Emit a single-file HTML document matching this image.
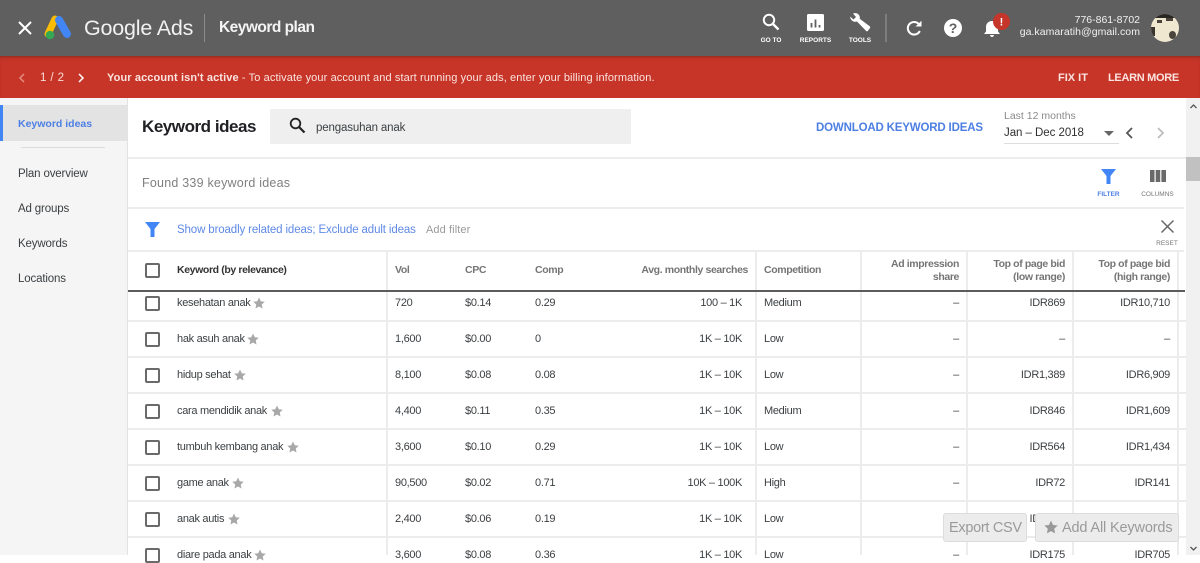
<!DOCTYPE html>
<html><head><meta charset="utf-8"><style>
html,body{margin:0;padding:0}
body{width:1200px;height:555px;overflow:hidden;position:relative;background:#fff;font-family:"Liberation Sans",sans-serif;color:#3c4043}
.a{position:absolute}
.t{position:absolute;white-space:nowrap;line-height:14px;font-size:11px;letter-spacing:-.3px}
.r{text-align:right}
.hl{position:absolute;background:#ececec;height:2px}
.vl{position:absolute;background:#ececec;width:2px;top:251px;height:304px}
.cb{position:absolute;left:145px;width:11px;height:11px;border:2px solid #6a6a6a;border-radius:2px;background:#fff}
.h{color:#757575;font-weight:bold;font-size:10.5px;letter-spacing:-.38px}
.star{position:absolute;width:12px;height:12px}
.lb{position:absolute;font-size:6.5px;font-weight:bold;color:#fff;white-space:nowrap;text-align:center;line-height:8px}
svg{position:absolute;overflow:visible}
</style></head><body>

<!-- top bar -->
<div class="a" style="left:0;top:0;width:1200px;height:56px;background:#5f5f5f"></div>
<svg style="left:18px;top:21px" width="14" height="14"><path d="M1 1L13 13M13 1L1 13" stroke="#fff" stroke-width="2"/></svg>
<svg style="left:45px;top:15px" width="28" height="25" viewBox="0 0 28 25"><path d="M10 4L3 19" stroke="#fbbc04" stroke-width="7" stroke-linecap="round"/><path d="M14 5L22 19" stroke="#4285f4" stroke-width="8" stroke-linecap="round"/><circle cx="5" cy="20" r="4.3" fill="#34a853"/></svg>
<div class="t" style="left:84px;top:14px;font-size:21.5px;line-height:28px;color:#f1f1f1;letter-spacing:-.2px">Google Ads</div>
<div class="a" style="left:204px;top:14px;width:1px;height:28px;background:#8a8a8a"></div>
<div class="t" style="left:219px;top:18px;font-size:15.5px;line-height:20px;font-weight:bold;color:#f4f4f4;letter-spacing:-.52px">Keyword plan</div>

<svg style="left:762px;top:13px" width="18" height="18"><circle cx="7" cy="7" r="5.2" fill="none" stroke="#fff" stroke-width="2"/><path d="M11 11L16.5 16.5" stroke="#fff" stroke-width="2.4"/></svg>
<div class="lb" style="left:751px;top:36.5px;width:40px">GO TO</div>
<svg style="left:807px;top:14px" width="17" height="17"><rect width="17" height="17" rx="1.5" fill="#fff"/><path d="M4.5 9v4.5M8.5 5.5v8M12.5 11v2.5" stroke="#5f5f5f" stroke-width="1.8"/></svg>
<div class="lb" style="left:795px;top:36.5px;width:41px">REPORTS</div>
<svg style="left:849px;top:12px" width="22" height="20" viewBox="0 0 22 20"><path d="M1 4.5L4.5 7.5L7 5L4 1.5C6.5 .5 9.5 1.2 10.5 4C10.9 5 10.9 6 10.7 6.7L21 14.5Q21.5 15.2 21 16L18.8 19Q18 19.7 17.2 19L8 9.5C5.500 10.3 1.8 9.5 1 4.5Z" fill="#fff"/></svg>
<div class="lb" style="left:845px;top:36.5px;width:30px">TOOLS</div>
<div class="a" style="left:885px;top:14px;width:2px;height:28px;background:#7d7d7d"></div>
<svg style="left:906px;top:20px" width="17" height="17" viewBox="0 0 17 17"><path d="M13.8 11A6.3 6.3 0 1 1 12.5 3.7" fill="none" stroke="#fff" stroke-width="2"/><path d="M9.5 6.5H15.5V.8Z" fill="#fff"/></svg>
<svg style="left:944px;top:19px" width="18" height="18"><circle cx="9" cy="9" r="9" fill="#fff"/><text x="9" y="14" text-anchor="middle" font-family="Liberation Sans" font-size="14" font-weight="bold" fill="#5f5f5f">?</text></svg>
<svg style="left:983px;top:19px" width="18" height="18" viewBox="0 0 18 18"><path d="M1 15L3 12.5V8C3 4.5 5.5 2 9 2S15 4.5 15 8V12.5L17 15Z" fill="#fff"/><path d="M7 16H11Q10.5 18 9 18T7 16Z" fill="#fff"/></svg>
<svg style="left:993px;top:13px" width="18" height="18"><circle cx="8.5" cy="8.5" r="8.5" fill="#c5352a"/><text x="8.5" y="12.5" text-anchor="middle" font-family="Liberation Sans" font-size="11" font-weight="bold" fill="#fff">!</text></svg>
<div class="t r" style="right:60px;top:13px;font-size:10.5px;color:#f1f1f1;letter-spacing:0">776-861-8702</div>
<div class="t r" style="right:60px;top:25px;font-size:10.5px;color:#f1f1f1;letter-spacing:.05px">ga.kamaratih@gmail.com</div>
<div class="a" style="left:1151px;top:14px;width:28px;height:28px;border-radius:50%;overflow:hidden;background:#efe7cf">
<div class="a" style="left:4px;top:0;width:20px;height:4px;background:#2a2622"></div>
<div class="a" style="left:6px;top:6px;width:5px;height:3px;background:#4a443c"></div>
<div class="a" style="left:15px;top:4px;width:7px;height:3px;background:#4a443c"></div>
<div class="a" style="left:0;top:13px;width:4px;height:9px;background:#3a352f"></div>
<div class="a" style="left:18px;top:17px;width:7px;height:8px;background:#4a443c;border-radius:50%"></div>
</div>

<!-- red banner -->
<div class="a" style="left:0;top:56px;width:1200px;height:42px;background:#c63527;box-shadow:inset 0 3px 3px -2px rgba(90,30,25,.55)"></div>
<svg style="left:18px;top:73px" width="7" height="10"><path d="M6 1L2 5L6 9" fill="none" stroke="#e58d82" stroke-width="1.5"/></svg>
<div class="t" style="left:40px;top:71px;font-size:11.5px;color:#f9dcd8;letter-spacing:.4px">1 / 2</div>
<svg style="left:78px;top:73px" width="7" height="10"><path d="M1 1L5 5L1 9" fill="none" stroke="#fff" stroke-width="1.5"/></svg>
<div class="t" style="left:107px;top:71px;font-size:11px;color:#fbe3e0;letter-spacing:.11px"><b>Your account isn't active</b> - To activate your account and start running your ads, enter your billing information.</div>
<div class="t" style="left:1058px;top:71px;font-size:11px;font-weight:bold;color:#fbe3e0;letter-spacing:0">FIX IT</div>
<div class="t" style="left:1108px;top:71px;font-size:11px;font-weight:bold;color:#fbe3e0;letter-spacing:-.3px">LEARN MORE</div>

<!-- sidebar -->
<div class="a" style="left:0;top:98px;width:127px;height:457px;background:#f5f5f5"></div>
<div class="a" style="left:0;top:105px;width:127px;height:36px;background:#e3e3e3"></div>
<div class="a" style="left:0;top:105px;width:3px;height:36px;background:#4285f4"></div>
<div class="t" style="left:18px;top:116.5px;color:#4d7fe3;font-weight:bold;font-size:10.5px;letter-spacing:0">Keyword ideas</div>
<div class="a" style="left:21px;top:147px;width:84px;height:1px;background:#dcdcdc"></div>
<div class="t" style="left:18px;top:166.5px;font-size:11.5px;letter-spacing:-.15px">Plan overview</div>
<div class="t" style="left:18px;top:201.5px;font-size:11.5px;letter-spacing:-.15px">Ad groups</div>
<div class="t" style="left:18px;top:236.5px;font-size:11.5px;letter-spacing:-.15px">Keywords</div>
<div class="t" style="left:18px;top:271.5px;font-size:11.5px;letter-spacing:-.15px">Locations</div>
<div class="a" style="left:127px;top:98px;width:1px;height:457px;background:#e2e2e2"></div>

<!-- header area -->
<div class="t" style="left:142px;top:117px;line-height:20px;font-size:17px;color:#202124;font-weight:bold;letter-spacing:-.46px">Keyword ideas</div>
<div class="a" style="left:270px;top:109px;width:361px;height:35px;background:#efefef"></div>
<svg style="left:289px;top:117px" width="17" height="17"><circle cx="6.5" cy="6.5" r="4.8" fill="none" stroke="#222" stroke-width="1.8"/><path d="M10 10L15.5 15.5" stroke="#222" stroke-width="2.2"/></svg>
<div class="t" style="left:316px;top:121px;font-size:11.5px;letter-spacing:-.15px">pengasuhan anak</div>
<div class="t" style="left:816px;top:121px;font-size:11.5px;font-weight:bold;color:#4d7fe3;letter-spacing:-.17px">DOWNLOAD KEYWORD IDEAS</div>
<div class="t" style="left:1004px;top:109px;font-size:10.5px;color:#8a8a8a;letter-spacing:0">Last 12 months</div>
<div class="t" style="left:1004px;top:126px;font-size:11.5px;color:#303030;letter-spacing:-.05px">Jan – Dec 2018</div>
<div class="a" style="left:1004px;top:143px;width:115px;height:1px;background:#dedede"></div>
<svg style="left:1104px;top:131px" width="10" height="5"><path d="M0 0H10L5 5Z" fill="#666"/></svg>
<svg style="left:1125px;top:127px" width="8" height="12"><path d="M7 1L2 6L7 11" fill="none" stroke="#555" stroke-width="1.8"/></svg>
<svg style="left:1157px;top:127px" width="8" height="12"><path d="M1 1L6 6L1 11" fill="none" stroke="#bdbdbd" stroke-width="1.8"/></svg>
<div class="hl" style="left:128px;top:157px;width:1058px"></div>

<!-- found row -->
<div class="t" style="left:142px;top:175.5px;font-size:12.5px;color:#808080;letter-spacing:.22px">Found 339 keyword ideas</div>
<svg style="left:1101px;top:169px" width="15" height="15"><path d="M0 0H15L9.5 7V15H5.5V7Z" fill="#4285f4"/></svg>
<div class="lb" style="left:1090px;top:191px;width:37px;color:#4d7fe3">FILTER</div>
<svg style="left:1150px;top:170px" width="16" height="12"><path d="M0 0H4.5V12H0ZM5.7 0H10.2V12H5.7ZM11.4 0H16V12H11.4Z" fill="#6a6a6a"/></svg>
<div class="lb" style="left:1138px;top:191px;width:39px;color:#777;font-weight:normal">COLUMNS</div>
<div class="hl" style="left:128px;top:207px;width:1056px"></div>

<!-- filter row -->
<svg style="left:145px;top:222px" width="15" height="15"><path d="M0 0H15L9.5 7V15H5.5V7Z" fill="#4285f4"/></svg>
<div class="t" style="left:177px;top:222.5px;font-size:11.5px;color:#5f8ae6;letter-spacing:-.13px">Show broadly related ideas; Exclude adult ideas</div>
<div class="t" style="left:426px;top:222.5px;font-size:11px;color:#9a9a9a;letter-spacing:.1px">Add filter</div>
<svg style="left:1161px;top:220px" width="13" height="13"><path d="M.5 .5L12.5 12.5M12.5 .5L.5 12.5" stroke="#666" stroke-width="1.5"/></svg>
<div class="lb" style="left:1153px;top:240px;width:28px;color:#777;font-weight:normal">RESET</div>
<div class="hl" style="left:128px;top:250px;width:1056px"></div>

<!-- table lines -->
<div class="hl" style="left:128px;top:320px;width:1058px"></div>
<div class="hl" style="left:128px;top:356px;width:1058px"></div>
<div class="hl" style="left:128px;top:392px;width:1058px"></div>
<div class="hl" style="left:128px;top:428px;width:1058px"></div>
<div class="hl" style="left:128px;top:464px;width:1058px"></div>
<div class="hl" style="left:128px;top:500px;width:1058px"></div>
<div class="hl" style="left:128px;top:536px;width:1058px"></div>
<div class="vl" style="left:386px"></div>
<div class="vl" style="left:755px"></div>
<div class="vl" style="left:860px"></div>
<div class="vl" style="left:966px"></div>
<div class="vl" style="left:1072px"></div>
<div class="vl" style="left:1177px"></div>
<div class="a" style="left:128px;top:290px;width:1057px;height:2px;background:#5c5c5c"></div>

<!-- table head -->
<div class="cb" style="top:263px"></div>
<div class="t" style="left:177px;top:263px;font-size:10.5px;font-weight:bold;color:#333;letter-spacing:-.38px">Keyword (by relevance)</div>
<div class="t h" style="left:395px;top:263px">Vol</div>
<div class="t h" style="left:465px;top:263px">CPC</div>
<div class="t h" style="left:535px;top:263px">Comp</div>
<div class="t h r" style="right:452px;top:263px">Avg. monthly searches</div>
<div class="t h" style="left:764px;top:263px">Competition</div>
<div class="t h r" style="right:241px;top:257px">Ad impression</div>
<div class="t h r" style="right:241px;top:270px">share</div>
<div class="t h r" style="right:135px;top:257px">Top of page bid</div>
<div class="t h r" style="right:135px;top:270px">(low range)</div>
<div class="t h r" style="right:30px;top:257px">Top of page bid</div>
<div class="t h r" style="right:30px;top:270px">(high range)</div>

<!-- row 1 -->
<div class="cb" style="top:296px"></div>
<div class="t" style="left:177px;top:296px">kesehatan anak</div>
<svg class="star" style="left:253px;top:297px" viewBox="0 0 24 24"><path d="M12 1L15.5 8.5L23.5 9.5L17.5 15L19 23L12 19L5 23L6.5 15L.5 9.5L8.5 8.5Z" fill="#a8a8a8"/></svg>
<div class="t" style="left:395px;top:296px">720</div><div class="t" style="left:465px;top:296px">$0.14</div><div class="t" style="left:535px;top:296px">0.29</div>
<div class="t r" style="right:458px;top:296px">100 – 1K</div><div class="t" style="left:764px;top:296px">Medium</div>
<div class="t r" style="right:241px;top:296px">–</div><div class="t r" style="right:135px;top:296px">IDR869</div><div class="t r" style="right:30px;top:296px">IDR10,710</div>
<!-- row 2 -->
<div class="cb" style="top:332px"></div>
<div class="t" style="left:177px;top:332px">hak asuh anak</div>
<svg class="star" style="left:247px;top:333px" viewBox="0 0 24 24"><path d="M12 1L15.5 8.5L23.5 9.5L17.5 15L19 23L12 19L5 23L6.5 15L.5 9.5L8.5 8.5Z" fill="#a8a8a8"/></svg>
<div class="t" style="left:395px;top:332px">1,600</div><div class="t" style="left:465px;top:332px">$0.00</div><div class="t" style="left:535px;top:332px">0</div>
<div class="t r" style="right:458px;top:332px">1K – 10K</div><div class="t" style="left:764px;top:332px">Low</div>
<div class="t r" style="right:241px;top:332px">–</div><div class="t r" style="right:135px;top:332px">–</div><div class="t r" style="right:30px;top:332px">–</div>
<!-- row 3 -->
<div class="cb" style="top:368px"></div>
<div class="t" style="left:177px;top:368px">hidup sehat</div>
<svg class="star" style="left:234px;top:369px" viewBox="0 0 24 24"><path d="M12 1L15.5 8.5L23.5 9.5L17.5 15L19 23L12 19L5 23L6.5 15L.5 9.5L8.5 8.5Z" fill="#a8a8a8"/></svg>
<div class="t" style="left:395px;top:368px">8,100</div><div class="t" style="left:465px;top:368px">$0.08</div><div class="t" style="left:535px;top:368px">0.08</div>
<div class="t r" style="right:458px;top:368px">1K – 10K</div><div class="t" style="left:764px;top:368px">Low</div>
<div class="t r" style="right:241px;top:368px">–</div><div class="t r" style="right:135px;top:368px">IDR1,389</div><div class="t r" style="right:30px;top:368px">IDR6,909</div>
<!-- row 4 -->
<div class="cb" style="top:404px"></div>
<div class="t" style="left:177px;top:404px">cara mendidik anak</div>
<svg class="star" style="left:271px;top:405px" viewBox="0 0 24 24"><path d="M12 1L15.5 8.5L23.5 9.5L17.5 15L19 23L12 19L5 23L6.5 15L.5 9.5L8.5 8.5Z" fill="#a8a8a8"/></svg>
<div class="t" style="left:395px;top:404px">4,400</div><div class="t" style="left:465px;top:404px">$0.11</div><div class="t" style="left:535px;top:404px">0.35</div>
<div class="t r" style="right:458px;top:404px">1K – 10K</div><div class="t" style="left:764px;top:404px">Medium</div>
<div class="t r" style="right:241px;top:404px">–</div><div class="t r" style="right:135px;top:404px">IDR846</div><div class="t r" style="right:30px;top:404px">IDR1,609</div>
<!-- row 5 -->
<div class="cb" style="top:440px"></div>
<div class="t" style="left:177px;top:440px">tumbuh kembang anak</div>
<svg class="star" style="left:287px;top:441px" viewBox="0 0 24 24"><path d="M12 1L15.5 8.5L23.5 9.5L17.5 15L19 23L12 19L5 23L6.5 15L.5 9.5L8.5 8.5Z" fill="#a8a8a8"/></svg>
<div class="t" style="left:395px;top:440px">3,600</div><div class="t" style="left:465px;top:440px">$0.10</div><div class="t" style="left:535px;top:440px">0.29</div>
<div class="t r" style="right:458px;top:440px">1K – 10K</div><div class="t" style="left:764px;top:440px">Low</div>
<div class="t r" style="right:241px;top:440px">–</div><div class="t r" style="right:135px;top:440px">IDR564</div><div class="t r" style="right:30px;top:440px">IDR1,434</div>
<!-- row 6 -->
<div class="cb" style="top:476px"></div>
<div class="t" style="left:177px;top:476px">game anak</div>
<svg class="star" style="left:232px;top:477px" viewBox="0 0 24 24"><path d="M12 1L15.5 8.5L23.5 9.5L17.5 15L19 23L12 19L5 23L6.5 15L.5 9.5L8.5 8.5Z" fill="#a8a8a8"/></svg>
<div class="t" style="left:395px;top:476px">90,500</div><div class="t" style="left:465px;top:476px">$0.02</div><div class="t" style="left:535px;top:476px">0.71</div>
<div class="t r" style="right:458px;top:476px">10K – 100K</div><div class="t" style="left:764px;top:476px">High</div>
<div class="t r" style="right:241px;top:476px">–</div><div class="t r" style="right:135px;top:476px">IDR72</div><div class="t r" style="right:30px;top:476px">IDR141</div>
<!-- row 7 -->
<div class="cb" style="top:512px"></div>
<div class="t" style="left:177px;top:512px">anak autis</div>
<svg class="star" style="left:228px;top:513px" viewBox="0 0 24 24"><path d="M12 1L15.5 8.5L23.5 9.5L17.5 15L19 23L12 19L5 23L6.5 15L.5 9.5L8.5 8.5Z" fill="#a8a8a8"/></svg>
<div class="t" style="left:395px;top:512px">2,400</div><div class="t" style="left:465px;top:512px">$0.06</div><div class="t" style="left:535px;top:512px">0.19</div>
<div class="t r" style="right:458px;top:512px">1K – 10K</div><div class="t" style="left:764px;top:512px">Low</div>
<div class="t r" style="right:241px;top:512px">–</div><div class="t r" style="right:135px;top:512px">IDR175</div>
<!-- row 8 -->
<div class="cb" style="top:548px"></div>
<div class="t" style="left:177px;top:548px">diare pada anak</div>
<svg class="star" style="left:254px;top:549px" viewBox="0 0 24 24"><path d="M12 1L15.5 8.5L23.5 9.5L17.5 15L19 23L12 19L5 23L6.5 15L.5 9.5L8.5 8.5Z" fill="#a8a8a8"/></svg>
<div class="t" style="left:395px;top:548px">3,600</div><div class="t" style="left:465px;top:548px">$0.08</div><div class="t" style="left:535px;top:548px">0.36</div>
<div class="t r" style="right:458px;top:548px">1K – 10K</div><div class="t" style="left:764px;top:548px">Low</div>
<div class="t r" style="right:241px;top:548px">–</div><div class="t r" style="right:135px;top:548px">IDR175</div><div class="t r" style="right:30px;top:548px">IDR705</div>

<!-- scrollbar -->
<div class="a" style="left:1186px;top:98px;width:14px;height:457px;background:#f1f1f1"></div>
<div class="a" style="left:1186px;top:157px;width:14px;height:24px;background:#c1c1c1"></div>
<svg style="left:1190px;top:104px" width="7" height="5"><path d="M.5 4L3.5 1L6.5 4" fill="none" stroke="#555" stroke-width="1.3"/></svg>
<svg style="left:1190px;top:546px" width="7" height="5"><path d="M.5 1L3.5 4L6.5 1" fill="none" stroke="#555" stroke-width="1.3"/></svg>

<!-- floating buttons -->
<div class="a" style="left:943px;top:513px;width:84px;height:29px;background:#ececec;border:1px solid #dcdcdc;border-radius:3px;box-sizing:border-box"></div>
<div class="t" style="left:949px;top:520px;font-size:14.5px;line-height:17px;color:#9a9a9a;letter-spacing:-.3px">Export CSV</div>
<div class="a" style="left:1035px;top:513px;width:144px;height:29px;background:#ececec;border:1px solid #dcdcdc;border-radius:3px;box-sizing:border-box"></div>
<svg style="left:1044px;top:520px" width="14" height="14" viewBox="0 0 24 24"><path d="M12 1L15.5 8.5L23.5 9.5L17.5 15L19 23L12 19L5 23L6.5 15L.5 9.5L8.5 8.5Z" fill="#999"/></svg>
<div class="t" style="left:1062px;top:520px;font-size:14.5px;line-height:17px;color:#9a9a9a;letter-spacing:-.15px">Add All Keywords</div>
</body></html>
